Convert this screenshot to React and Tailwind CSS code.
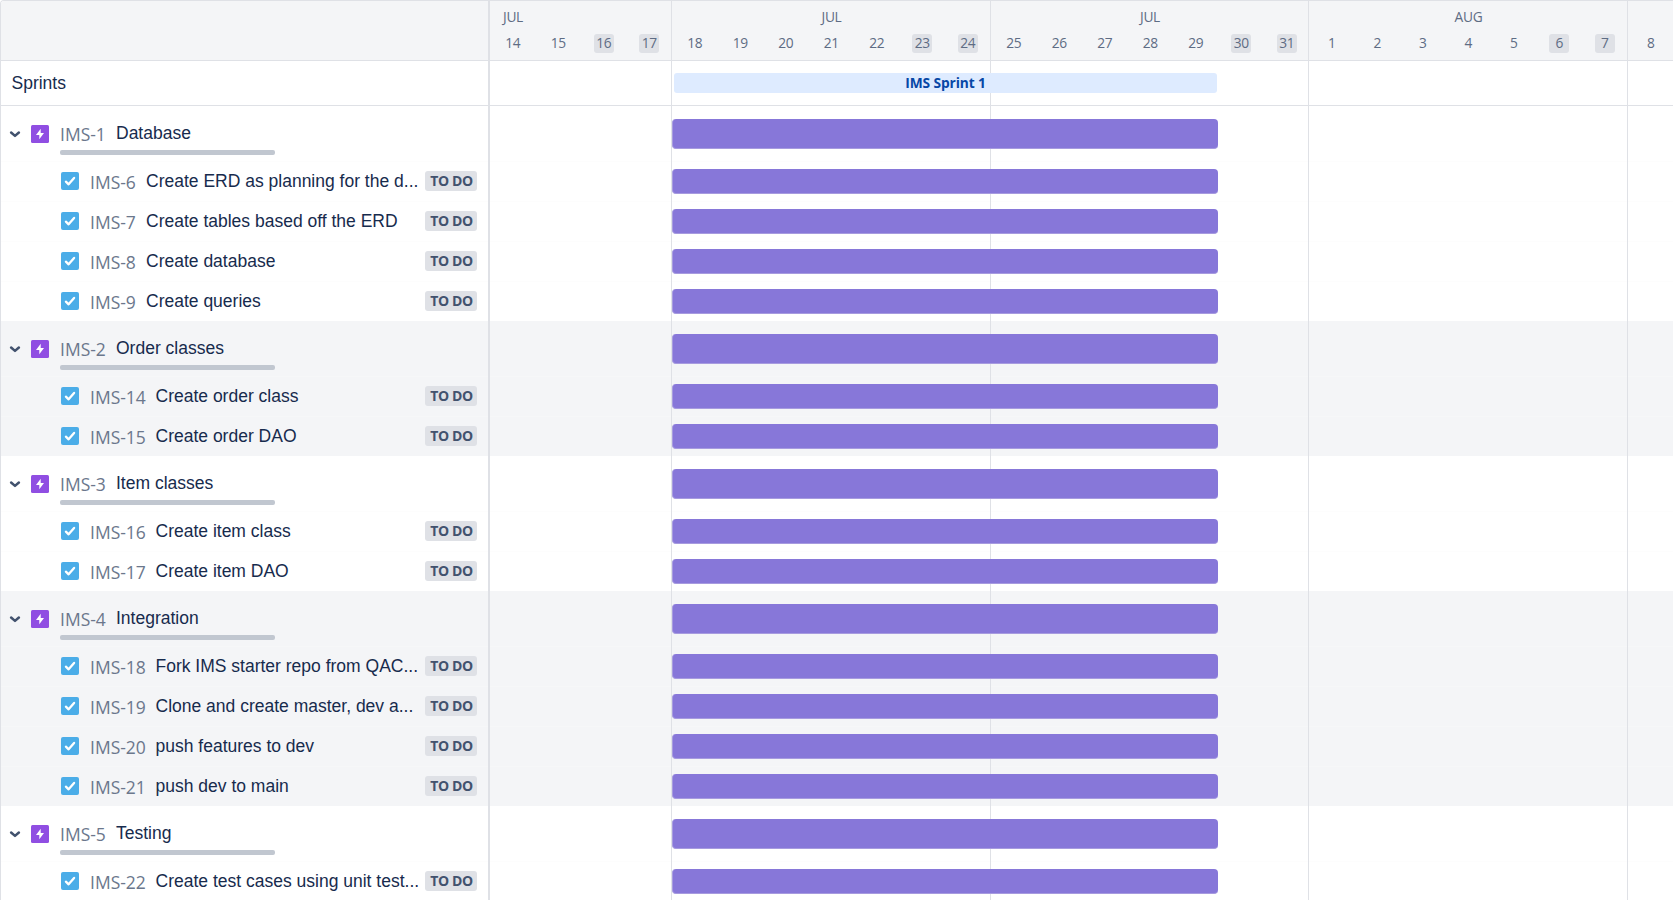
const WEEKS = [
  { label: "JUL", days: [14, 15, 16, 17], off: [16, 17], width: "w-[182px]", first: true },
  { label: "JUL", days: [18, 19, 20, 21, 22, 23, 24], off: [23, 24], width: "w-[319px]" },
  { label: "JUL", days: [25, 26, 27, 28, 29, 30, 31], off: [30, 31], width: "w-[318px]" },
  { label: "AUG", days: [1, 2, 3, 4, 5, 6, 7], off: [6, 7], width: "w-[319px]" },
  { label: "", days: [8], off: [], width: "w-[46px]", last: true },
];

const EPICS = [
  {
    id: "IMS-1",
    title: "Database",
    tasks: [
      ["IMS-6", "Create ERD as planning for the d..."],
      ["IMS-7", "Create tables based off the ERD"],
      ["IMS-8", "Create database"],
      ["IMS-9", "Create queries"],
    ],
  },
  {
    id: "IMS-2",
    title: "Order classes",
    tasks: [
      ["IMS-14", "Create order class"],
      ["IMS-15", "Create order DAO"],
    ],
  },
  {
    id: "IMS-3",
    title: "Item classes",
    tasks: [
      ["IMS-16", "Create item class"],
      ["IMS-17", "Create item DAO"],
    ],
  },
  {
    id: "IMS-4",
    title: "Integration",
    tasks: [
      ["IMS-18", "Fork IMS starter repo from QAC..."],
      ["IMS-19", "Clone and create master, dev a..."],
      ["IMS-20", "push features to dev"],
      ["IMS-21", "push dev to main"],
    ],
  },
  {
    id: "IMS-5",
    title: "Testing",
    tasks: [["IMS-22", "Create test cases using unit test..."]],
  },
];

const stripe = (i) => (i % 2 ? "bg-[#f4f5f7]" : "bg-white");
const rowLine = (i) => (i % 2 ? "border-[#f6f7f8]" : "border-[#fdfdfd]");

function Chevron() {
  return (
    <svg className="ml-2 size-3 shrink-0" viewBox="0 0 12 12" fill="none">
      <path d="M2.1 4.5 6 7.9 9.9 4.5" stroke="#42526e" strokeWidth="2.5" strokeLinecap="round" strokeLinejoin="round" />
    </svg>
  );
}

function EpicIcon() {
  return (
    <svg className="ml-[10px] size-[18px] shrink-0" viewBox="0 0 18 18">
      <rect width="18" height="18" rx="1.5" fill="#904ee2" />
      <path d="M9.7 3.7v4.2h3.3L8.3 14.3v-4.2H5z" fill="#fff" />
    </svg>
  );
}

function TaskIcon() {
  return (
    <svg className="ml-[60px] size-[18px] shrink-0" viewBox="0 0 18 18" fill="none">
      <rect width="18" height="18" rx="2" fill="#4bade8" />
      <path d="M4.9 9.7 7.6 12.3 13.1 5.9" stroke="#fff" strokeWidth="2.3" strokeLinecap="round" strokeLinejoin="round" />
    </svg>
  );
}

function IssueKey({ id, className }) {
  return (
    <span
      className={`shrink-0 font-['Open_Sans',sans-serif] text-[17.5px] leading-5 whitespace-nowrap text-[#6b778c] ${className}`}
    >
      {id}
    </span>
  );
}

function EpicRow({ epic }) {
  return (
    <div className="flex h-[55px] flex-col">
      <div className="mt-[18px] flex h-5 items-center">
        <Chevron />
        <EpicIcon />
        <IssueKey id={epic.id} className="ml-[11px] w-[47px] pb-px" />
        <span className="ml-[9px] pb-[2px] text-[17.5px] leading-5 whitespace-nowrap">{epic.title}</span>
      </div>
      <div className="mt-[6px] ml-[59px] h-[5px] w-[215px] rounded-[2px] bg-[#c1c7d0]" />
    </div>
  );
}

function TaskRow({ id, title, line }) {
  return (
    <div className={`flex h-10 items-center border-t pb-px ${line}`}>
      <TaskIcon />
      <IssueKey id={id} className={`ml-[11px] pt-px ${id.length > 5 ? "w-[56.5px]" : "w-[47px]"}`} />
      <span className="ml-[9px] flex-1 pb-px text-[17.5px] leading-5 whitespace-nowrap">{title}</span>
      <span className="mr-[11px] flex h-5 w-[52px] shrink-0 items-center justify-center rounded-[3px] bg-[#dfe1e6] pl-px font-['Open_Sans',sans-serif] text-[14px] leading-5 font-bold tracking-[-0.4px] whitespace-nowrap text-[#42526e]">
        TO DO
      </span>
    </div>
  );
}

function Bar({ size }) {
  return (
    <div
      className={`ml-[182px] w-[546px] rounded-[4px] border-b border-l border-[#a79bdf] bg-[#8777d9] ${size}`}
    />
  );
}

export default function App() {
  return (
    <div className="flex h-[900px] w-full overflow-hidden bg-white font-['Liberation_Sans',Arial,sans-serif] text-[#172b4d]">
      <aside className="w-[490px] shrink-0 overflow-hidden rounded-tl-[4px] border-t border-r-2 border-l border-[#dfe1e6]">
        <div className="h-[60px] border-b border-[#dfe1e6] bg-[#f4f5f7]" />
        <div className="flex h-[45px] items-center border-b border-[#dfe1e6] pl-[10.5px] text-[17.5px]">Sprints</div>
        {EPICS.map((epic, i) => (
          <section key={epic.id} className={stripe(i)}>
            <EpicRow epic={epic} />
            {epic.tasks.map(([id, title]) => (
              <TaskRow key={id} id={id} title={title} line={rowLine(i)} />
            ))}
          </section>
        ))}
      </aside>

      <main className="relative flex-1 overflow-hidden border-t border-[#dfe1e6]">
        <div className="h-[60px] border-b border-[#dfe1e6] bg-[#f4f5f7]" />
        <div className="h-[45px] border-b border-[#dfe1e6]" />
        {EPICS.map((epic, i) => (
          <section key={epic.id} className={stripe(i)}>
            <div className="h-[55px]" />
            {epic.tasks.map(([id]) => (
              <div key={id} className={`h-10 border-t ${rowLine(i)}`} />
            ))}
          </section>
        ))}

        <div className="absolute inset-0 flex">
          {WEEKS.map((week, i) => (
            <div
              key={i}
              className={`flex shrink-0 flex-col font-['Open_Sans',sans-serif] text-[13.75px] tracking-[-0.3px] text-[#5e6c84] ${week.width} ${
                week.last ? "" : "border-r border-[#dfe1e6]"
              }`}
            >
              <div className={`mt-[6px] flex h-5 items-center justify-center ${week.first ? "w-[46px]" : "-mr-px"}`}>
                {week.label}
              </div>
              <div className="mt-[7px] -mr-[2px] flex h-[19px]">
                {week.days.map((day) => (
                  <div key={day} className="flex w-[45.5px] shrink-0 justify-center">
                    <span
                      className={`flex w-5 items-center justify-center rounded-[3px] pb-[2px] leading-[17px] ${
                        week.off.includes(day) ? "bg-[#dfe1e6]" : ""
                      }`}
                    >
                      {day}
                    </span>
                  </div>
                ))}
              </div>
            </div>
          ))}
        </div>

        <div className="absolute inset-0 pt-[72px]">
          <div className="mb-[13px] ml-[184px] flex h-5 w-[543px] items-center justify-center rounded-[3px] bg-[#deebff] font-['Open_Sans',sans-serif] text-[13.75px] leading-[18px] font-bold tracking-[-0.1px] text-[#0747a6]">
            IMS Sprint 1
          </div>
          {EPICS.map((epic) => (
            <div key={epic.id}>
              <div className="h-[55px] pt-[13px]">
                <Bar size="h-[30px]" />
              </div>
              {epic.tasks.map(([id]) => (
                <div key={id} className="h-10 pt-2">
                  <Bar size="h-[25px]" />
                </div>
              ))}
            </div>
          ))}
        </div>
      </main>
    </div>
  );
}
